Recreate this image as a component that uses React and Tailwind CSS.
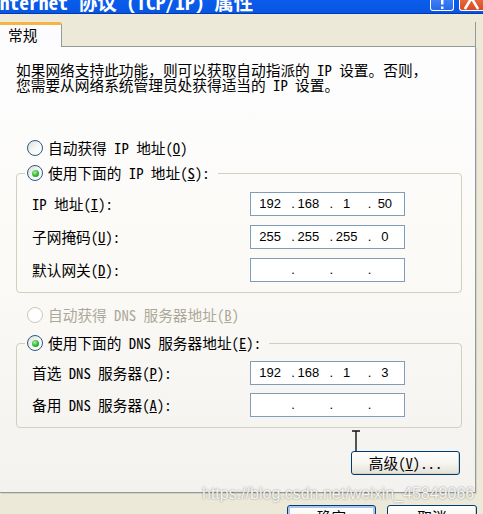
import React from "react";

const CJK = "font-['Noto_Sans_Mono_CJK_SC','Noto_Sans_CJK_SC','Noto_Sans',sans-serif]";

function Radio({ checked, disabled }) {
  return (
    <span
      className={`flex h-[16px] w-[16px] shrink-0 items-center justify-center rounded-full border ${
        disabled
          ? "border-[#cac8bb] bg-white"
          : "border-[#2b5a87] bg-linear-to-br from-[#dcdcd7] via-[#f7f7f5] to-white"
      }`}
    >
      {checked && (
        <span className="h-[7px] w-[7px] rounded-full bg-[radial-gradient(circle_at_40%_35%,#a8f5a8,#2fb52f_55%,#178a17)]" />
      )}
    </span>
  );
}

function RadioRow({ checked, disabled, children }) {
  return (
    <div className={`flex h-[16px] items-center gap-[5px] ${disabled ? "text-[#aca899]" : "text-black"}`}>
      <Radio checked={checked} disabled={disabled} />
      <span className="whitespace-nowrap leading-[16px]">{children}</span>
    </div>
  );
}

function IPBox({ parts }) {
  return (
    <div className="grid h-[24px] w-[155px] shrink-0 grid-cols-4 border border-[#7f9db9] bg-white font-['Liberation_Sans',Arial,sans-serif] text-[13px] leading-[22px] text-black">
      {parts.map((p, i) => (
        <div key={i} className="relative text-center">
          {i > 0 && <span className="absolute left-[2px] top-0">.</span>}
          {p}
        </div>
      ))}
    </div>
  );
}

function Row({ label, parts }) {
  return (
    <div className="flex h-[24px] items-center justify-between">
      <span className="whitespace-nowrap leading-[16px]">{label}</span>
      <IPBox parts={parts} />
    </div>
  );
}

function Group({ legend, children, gap }) {
  return (
    <fieldset className="rounded-[4px] border border-[#d0d0bf] p-0">
      <legend className="ml-[8px] pl-[2px] pr-[8px]">
        <RadioRow checked>{legend}</RadioRow>
      </legend>
      <div className={`flex flex-col pb-[10px] pl-[15px] pr-[56px] ${gap}`}>{children}</div>
    </fieldset>
  );
}

function XPButton({ children, className = "" }) {
  return (
    <div
      className={`flex h-[24px] items-center justify-center rounded-[3px] border border-[#003c74] bg-linear-to-b from-white via-[#f6f5f1] to-[#e3e1d8] text-black shadow-[inset_-1px_-1px_0_#d6d0c5] ${className}`}
    >
      {children}
    </div>
  );
}

export default function App() {
  return (
    <div className={`relative h-[514px] w-[483px] overflow-hidden bg-[#ece9d8] text-[14.7px] text-black ${CJK}`}>
      {/* title bar */}
      <div className="flex h-[14px] items-start overflow-hidden border-b border-[#0039b0] bg-linear-to-b from-[#0b5cec] to-[#0756e2]">
        <div className="ml-[-10px] mt-[-8px] flex-1 whitespace-nowrap text-[19.5px] font-bold leading-[20px] text-white">
          Internet 协议 (TCP/IP) 属性
        </div>
        <div className="mr-[5px] h-[11px] w-[24px] rounded-b-[3px] border border-t-0 border-white bg-linear-to-b from-[#3a80f8] to-[#2a66e8]">
          <svg width="22" height="10" viewBox="0 0 22 10">
            <rect x="10" y="0" width="2.5" height="4.5" fill="white" />
            <rect x="10" y="6.5" width="2.5" height="2.5" fill="white" />
          </svg>
        </div>
        <div className="h-[11px] w-[24px] rounded-bl-[3px] border border-t-0 border-r-0 border-white bg-linear-to-b from-[#e8673c] to-[#d84a22]">
          <svg width="23" height="10" viewBox="0 0 23 10">
            <path d="M11.5 -2 L5.5 8 M11.5 -2 L17.5 8" stroke="white" strokeWidth="2.6" strokeLinecap="square" fill="none" />
          </svg>
        </div>
      </div>

      <div className="pt-[8px]">
        {/* tab row */}
        <div className="flex h-[25px] w-[476px]">
          <div className="h-[25px] w-[62px] rounded-tr-[3px] border-r border-t-[3px] border-r-[#919b9c] border-t-[#f5b444] bg-[#fcfcfe] pl-[8px] leading-[20px]">
            常规
          </div>
          <div className="flex-1 border-b border-r border-[#919b9c]" />
        </div>

        {/* panel */}
        <div className="w-[476px] border-b border-r border-[#919b9c] bg-linear-to-b from-[#fdfdfe] via-[#fbfaf6] to-[#f3f2ee] pb-[17px] pl-[16px] pr-[13px] pt-[15px] shadow-[1px_1px_0_#d6d2c2]">
          <p className="whitespace-nowrap leading-[15px]">
            如果网络支持此功能，则可以获取自动指派的 IP 设置。否则，
            <br />
            您需要从网络系统管理员处获得适当的 IP 设置。
          </p>

          <div className="ml-[11px] mt-[48px]">
            <RadioRow>
              自动获得 IP 地址(<u>O</u>)
            </RadioRow>
          </div>

          <div className="mt-[9px]">
            <Group legend={<>使用下面的 IP 地址(<u>S</u>):</>} gap="gap-[9px] pt-[11px]">
              <Row label={<>IP 地址(<u>I</u>):</>} parts={["192", "168", "1", "50"]} />
              <Row label={<>子网掩码(<u>U</u>):</>} parts={["255", "255", "255", "0"]} />
              <Row label={<>默认网关(<u>D</u>):</>} parts={["", "", "", ""]} />
            </Group>
          </div>

          <div className="ml-[11px] mt-[14px]">
            <RadioRow disabled>
              自动获得 DNS 服务器地址(<u>B</u>)
            </RadioRow>
          </div>

          <div className="mt-[12px]">
            <Group legend={<>使用下面的 DNS 服务器地址(<u>E</u>):</>} gap="gap-[8px] pt-[10px]">
              <Row label={<>首选 DNS 服务器(<u>P</u>):</>} parts={["192", "168", "1", "3"]} />
              <Row label={<>备用 DNS 服务器(<u>A</u>):</>} parts={["", "", "", ""]} />
            </Group>
          </div>

          <div className="mt-[23px] flex justify-end pr-[2px]">
            <XPButton className="w-[109px]">
              高级(<u>V</u>)...
            </XPButton>
          </div>
        </div>

        {/* bottom buttons */}
        <div className="mt-[12px] flex justify-end gap-[11px] pr-[6px]">
          <XPButton className="w-[89px] shadow-[inset_0_0_0_2px_#a9c4ef]">确定</XPButton>
          <XPButton className="w-[90px]">取消</XPButton>
        </div>
      </div>

      {/* mouse cursor */}
      <svg className="absolute left-[351px] top-[429px]" width="10" height="24" viewBox="0 0 10 24">
        <path d="M1 2 H9 M5 2 V22" stroke="#111" strokeWidth="1.4" fill="none" />
      </svg>

      {/* watermark */}
      <div className="absolute left-[202px] top-[484px] whitespace-nowrap font-['Liberation_Sans',Arial,sans-serif] text-[16px] leading-[20px] text-[#f4f4f4] [text-shadow:0_0_2px_rgba(0,0,0,0.45)]">
        https://blog.csdn.net/weixin_45849066
      </div>
    </div>
  );
}
